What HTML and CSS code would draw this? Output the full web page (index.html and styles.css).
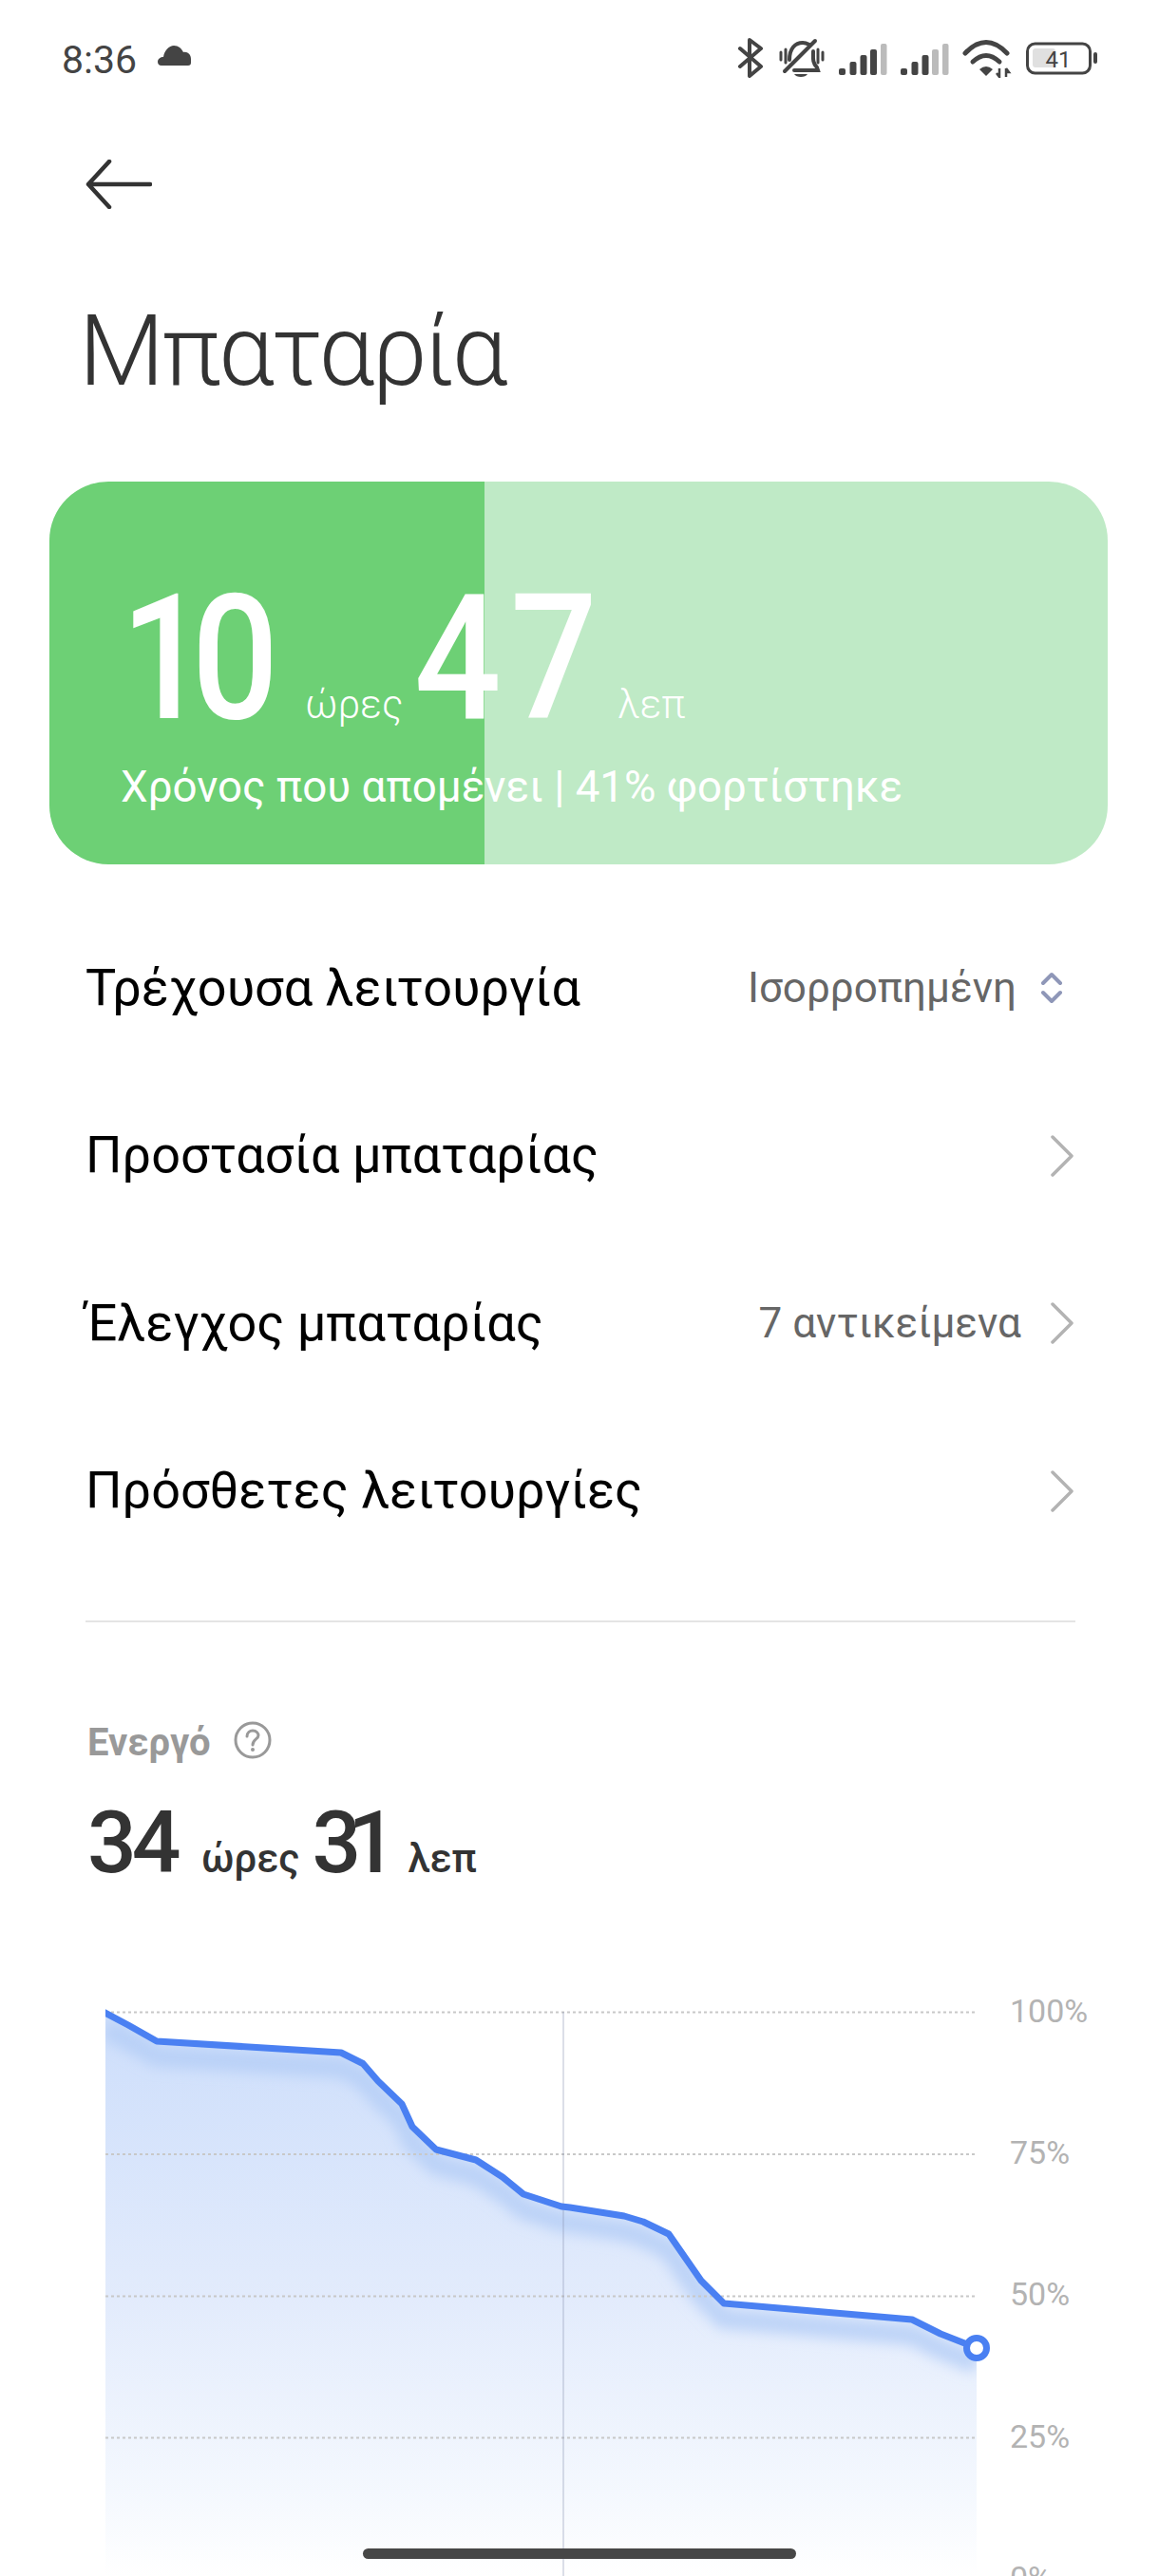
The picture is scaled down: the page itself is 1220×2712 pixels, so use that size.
FILE: index.html
```html
<!DOCTYPE html>
<html lang="el">
<head>
    <meta charset="UTF-8">
    <meta name="viewport" content="width=device-width, initial-scale=1.0">
    <title>Μπαταρία</title>
    <link rel="stylesheet" href="styles.css">
</head>
<body>
    <div class="screen">
        <div class="status-bar">
            <div class="status-left">
                <span class="clock">8:36</span>
                <svg class="cloud" width="36" height="22" viewBox="0 0 36 22">
                    <path d="M4 21C1 21 0 19 0 17C0 14 3 12 6 12C7 5 12 0 17 0C22 0 25 3 27 7C31 6 35 9 35 14V18C35 20 34 21 32 21Z"></path>
                </svg>
            </div>
            <div class="status-icons">
                <svg width="29" height="44" viewBox="0 0 29 44" fill="none" stroke="#444" stroke-width="4" stroke-linecap="round" stroke-linejoin="round">
                    <path d="M2 13L24 32L12 42V4L24 13L2 32"></path>
                </svg>
                <svg width="49" height="44" viewBox="0 0 49 44" fill="none" stroke="#444" stroke-width="4" stroke-linecap="round">
                    <path d="M11 25C11 13 17 7 25 7C28 7 30 8 32 9"></path>
                    <path d="M36 16C36 23 35 28 40 33L41 36H16"></path>
                    <path d="M38 5L6 37"></path>
                    <path d="M2 17V25M7 14V28M41 14V28M46 17V25" stroke-width="3"></path>
                    <path d="M16 40H30C28 44 18 44 16 40Z" fill="#444" stroke="none"></path>
                </svg>
                <svg width="51" height="44" viewBox="0 0 51 44">
                    <rect x="0" y="34" width="7" height="7" rx="2" fill="#444"></rect>
                    <rect x="11.5" y="27" width="7" height="14" rx="2" fill="#444"></rect>
                    <rect x="22.5" y="20" width="7" height="21" rx="2" fill="#444"></rect>
                    <rect x="33" y="14" width="7" height="27" rx="2" fill="#444"></rect>
                    <rect x="44" y="8" width="6.500" height="33" rx="2" fill="#bbb"></rect>
                </svg>
                <svg width="51" height="44" viewBox="0 0 51 44">
                    <rect x="0" y="34" width="7" height="7" rx="2" fill="#444"></rect>
                    <rect x="11.5" y="27" width="7" height="14" rx="2" fill="#444"></rect>
                    <rect x="22.5" y="20" width="7" height="21" rx="2" fill="#444"></rect>
                    <rect x="33" y="14" width="7" height="27" rx="2" fill="#bbb"></rect>
                    <rect x="44" y="8" width="6.500" height="33" rx="2" fill="#bbb"></rect>
                </svg>
                <svg width="53" height="44" viewBox="0 0 53 44" fill="none" stroke="#444" stroke-width="5" stroke-linecap="round">
                    <path d="M3 18Q25 -5 47 18"></path>
                    <path d="M11 27Q25 14 39 27"></path>
                    <path d="M18 35Q25 29 32 35L25 42Z" fill="#444" stroke="none"></path>
                    <path d="M39 34V42M36 39L39 43L39 39M46 34V43M46 34L49 38H46" stroke-width="2.500" stroke-linecap="butt"></path>
                </svg>
                <svg width="75" height="44" viewBox="0 0 75 44">
                    <rect x="7" y="13" width="24" height="20" rx="3" fill="#e0e0e0"></rect>
                    <rect x="1.500" y="8" width="66" height="31" rx="8" fill="none" stroke="#444" stroke-width="3"></rect>
                    <rect x="71" y="17" width="4" height="12" rx="2" fill="#444"></rect>
                    <text class="battery-level" x="34" y="33">41</text>
                </svg>
            </div>
        </div>

        <div class="back-button">
            <svg width="70" height="52" viewBox="0 0 70 52" fill="none" stroke="#333" stroke-width="4.500" stroke-linecap="round" stroke-linejoin="round">
                <path d="M68 26H3M25 2L3 26L25 50"></path>
            </svg>
        </div>

        <h1 class="page-title">Μπαταρία</h1>

        <div class="battery-card">
            <div class="time-left">
                <span class="big-num hours">10</span>
                <span class="big-unit">ώρες</span>
                <span class="big-num minutes">47</span>
                <span class="big-unit">λεπ</span>
            </div>
            <div class="card-note">Χρόνος που απομένει | 41% φορτίστηκε</div>
        </div>

        <div class="settings-list">
            <div class="row">
                <span class="row-label">Τρέχουσα λειτουργία</span>
                <span class="row-value mode">Ισορροπημένη</span>
                <svg width="34" height="34" viewBox="0 0 34 34" fill="none" stroke="#8f97b8" stroke-width="4" stroke-linecap="round" stroke-linejoin="round">
                    <path d="M2 12L11 3L20 12M2 22L11 31L20 22"></path>
                </svg>
            </div>
            <div class="row">
                <span class="row-label">Προστασία μπαταρίας</span>
                <svg class="chevron" width="24" height="44" viewBox="0 0 24 44"><path d="M2 2L22 22L2 42"></path></svg>
            </div>
            <div class="row">
                <span class="row-label">Έλεγχος μπαταρίας</span>
                <span class="row-value">7 αντικείμενα</span>
                <svg class="chevron" width="24" height="44" viewBox="0 0 24 44"><path d="M2 2L22 22L2 42"></path></svg>
            </div>
            <div class="row">
                <span class="row-label">Πρόσθετες λειτουργίες</span>
                <svg class="chevron" width="24" height="44" viewBox="0 0 24 44"><path d="M2 2L22 22L2 42"></path></svg>
            </div>
        </div>

        <div class="divider"></div>

        <div class="usage">
            <div class="usage-title">
                <span>Ενεργό</span>
                <svg class="help-icon" width="40" height="40" viewBox="0 0 40 40" fill="none" stroke="#999" stroke-width="3">
                    <circle cx="20" cy="20" r="18"></circle>
                    <path d="M14 16C14 12 17 10 20 10C24 10 26 13 26 15C26 19 20 19 20 25" stroke-linecap="round"></path>
                    <circle cx="20" cy="30" r="2" fill="#999" stroke="none"></circle>
                </svg>
            </div>
            <div class="usage-time">
                <span class="mid-num used-hours">34</span>
                <span class="mid-unit">ώρες</span>
                <span class="mid-num used-minutes">31</span>
                <span class="mid-unit">λεπ</span>
            </div>
        </div>

        <svg class="chart" width="1220" height="632" viewBox="0 -20 1220 632">
            <defs>
                <linearGradient id="areaFill" x1="0" y1="0" x2="0" y2="1">
                    <stop offset="0" stop-color="#cddefb"></stop>
                    <stop offset="0.5" stop-color="#e2ebfc"></stop>
                    <stop offset="0.85" stop-color="#f4f8fe"></stop>
                    <stop offset="1" stop-color="#ffffff"></stop>
                </linearGradient>
                <clipPath id="areaClip">
                    <path d="M111 19L135 32L165 49L359 61L382 72.500L398 91L423 115L434 139L459 163L501 174L529 192L551 210L591 223L600 224L657 233L677 239L704 252L738 301L762 325L960 342L990 357L1028 372V612H111Z"></path>
                </clipPath>
                <clipPath id="lineClip">
                    <rect x="111" y="0" width="930" height="400"></rect>
                </clipPath>
                <filter id="glowBlur" x="-5%" y="-20%" width="110%" height="140%">
                    <feGaussianBlur stdDeviation="7"></feGaussianBlur>
                </filter>
            </defs>
            <path d="M111 19L135 32L165 49L359 61L382 72.500L398 91L423 115L434 139L459 163L501 174L529 192L551 210L591 223L600 224L657 233L677 239L704 252L738 301L762 325L960 342L990 357L1028 372V612H111Z" fill="url(#areaFill)"></path>
            <g clip-path="url(#areaClip)">
                <path class="line-glow" d="M111 35L135 48L165 65L359 77L382 88.500L398 107L423 131L434 155L459 179L501 190L529 208L551 226L591 239L600 240L657 249L677 255L704 268L738 317L762 341L960 358L990 373L1028 388" filter="url(#glowBlur)"></path>
            </g>
            <path class="grid-line" d="M111 18.500H1026M111 168H1026M111 317.500H1026M111 466.500H1026"></path>
            <path class="cursor-line" d="M593 18V612"></path>
            <path class="battery-line" clip-path="url(#lineClip)" d="M105 16L135 32L165 49L359 61L382 72.500L398 91L423 115L434 139L459 163L501 174L529 192L551 210L591 223L600 224L657 233L677 239L704 252L738 301L762 325L960 342L990 357L1028 372"></path>
            <circle class="line-end" cx="1028" cy="372" r="10.500"></circle>
            <text class="axis-label" x="1063" y="29">100%</text>
            <text class="axis-label" x="1063" y="178">75%</text>
            <text class="axis-label" x="1063" y="327">50%</text>
            <text class="axis-label" x="1063" y="477">25%</text>
            <text class="axis-label" x="1063" y="626">0%</text>
        </svg>

        <div class="home-bar"></div>
    </div>
</body>
</html>
```

FILE: styles.css
```css
body, html {
    margin: 0;
    padding: 0;
    background-color: #ffffff;
    font-family: Roboto, "Noto Sans", sans-serif;
}
svg {
    display: block;
    flex: none;
}
.screen {
    position: relative;
    width: 1220px;
    height: 2712px;
    overflow: hidden;
}

/* status bar */
.status-bar {
    height: 120px;
    padding: 0 65px;
    display: flex;
    align-items: center;
    justify-content: space-between;
}
.status-left {
    display: flex;
    align-items: center;
    margin-top: 5px;
}
.clock {
    font-size: 41px;
    color: #444444;
}
.cloud {
    margin-left: 22px;
    margin-bottom: 8px;
    fill: #444444;
}
.status-icons {
    display: flex;
    gap: 14px;
}
.battery-level {
    font-size: 24px;
    fill: #444444;
    text-anchor: middle;
}

/* header */
.back-button {
    margin: 48px 0 0 90px;
}
.page-title {
    margin: 90px 0 0 83px;
    font-size: 104px;
    line-height: 120px;
    letter-spacing: -2.500px;
    font-weight: 300;
    color: #333333;
}

/* green card */
.battery-card {
    margin: 77px 54px 0 52px;
    height: 403px;
    box-sizing: border-box;
    padding: 92px 0 0 75px;
    border-radius: 62px;
    background: linear-gradient(90deg, #6dd075 458px, #bfeac6 458px);
    color: #ffffff;
}
.time-left {
    display: flex;
    align-items: baseline;
    height: 190px;
}
.big-num {
    display: block;
    font-size: 183px;
    line-height: 190px;
    font-weight: 500;
    transform: scaleX(0.88);
    transform-origin: 0 50%;
    white-space: nowrap;
}
.big-num.hours {
    width: 194px;
    letter-spacing: -19px;
}
.big-num.minutes {
    width: 214px;
    letter-spacing: 11px;
}
.big-unit {
    font-size: 42px;
    font-weight: 300;
    margin-right: 12px;
}
.card-note {
    margin-top: 13px;
    font-size: 45.700px;
    line-height: 54px;
}

/* settings rows */
.settings-list {
    margin-top: 42px;
}
.row {
    height: 176.500px;
    padding: 0 90px;
    display: flex;
    align-items: center;
}
.row-label {
    flex: 1;
    font-size: 54px;
    color: #000000;
    margin-bottom: 2px;
}
.row-value {
    font-size: 44px;
    color: #666666;
    margin-right: 31px;
}
.row-value.mode {
    margin-right: 26px;
}
.chevron {
    fill: none;
    stroke: #b3b3b3;
    stroke-width: 3.500;
    stroke-linecap: round;
    stroke-linejoin: round;
}
.divider {
    margin: 48px 88px 0 90px;
    height: 2px;
    background-color: #e4e4e4;
}

/* active time */
.usage {
    margin: 104px 0 0 92px;
}
.usage-title {
    display: flex;
    align-items: center;
    gap: 24px;
    height: 44px;
    font-size: 40px;
    font-weight: 700;
    color: #999999;
}
.help-icon {
    margin-bottom: 4px;
}
.usage-time {
    display: flex;
    align-items: baseline;
    height: 107px;
    margin-top: 31px;
    color: #333333;
}
.mid-num {
    display: block;
    font-size: 91px;
    font-weight: 500;
    white-space: nowrap;
}
.mid-num.used-hours {
    width: 120px;
    letter-spacing: -5px;
}
.mid-num.used-minutes {
    width: 101px;
    letter-spacing: -14px;
}
.mid-unit {
    font-size: 42px;
    font-weight: 500;
    margin-right: 13px;
}

/* chart */
.chart {
    margin-top: 86px;
}
.grid-line {
    fill: none;
    stroke: #c8c8c8;
    stroke-width: 2;
    stroke-dasharray: 3 3;
}
.cursor-line {
    fill: none;
    stroke: #8c96b4;
    stroke-opacity: 0.3;
    stroke-width: 2;
}
.line-glow {
    fill: none;
    stroke: #b4cdf6;
    stroke-width: 22;
    stroke-opacity: 0.8;
}
.battery-line {
    fill: none;
    stroke: #4a80f2;
    stroke-width: 7;
    stroke-linejoin: round;
}
.line-end {
    fill: #ffffff;
    stroke: #4a80f2;
    stroke-width: 7;
}
.axis-label {
    font-size: 34px;
    fill: #b3b3b3;
}
.home-bar {
    position: absolute;
    left: 382px;
    top: 2683px;
    width: 456px;
    height: 11px;
    border-radius: 6px;
    background-color: #474747;
}
```
